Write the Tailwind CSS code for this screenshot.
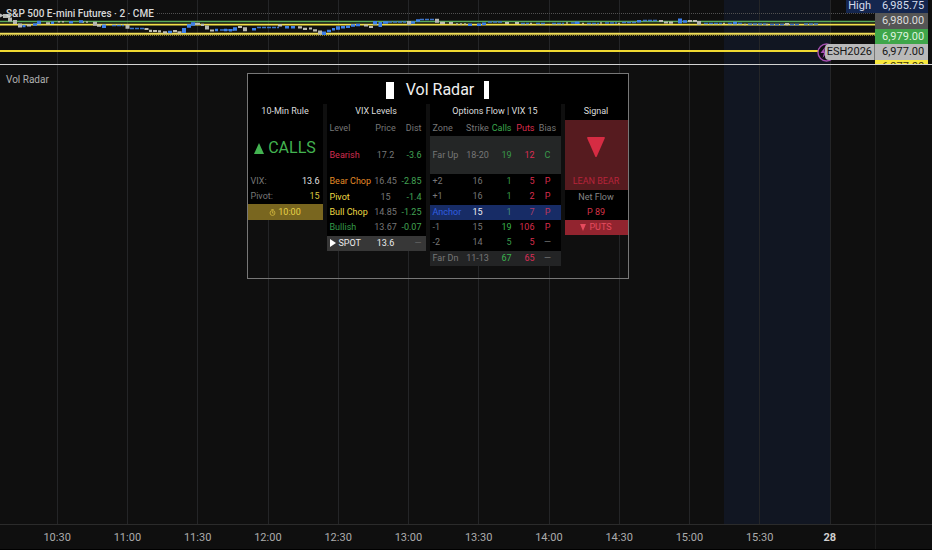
<!DOCTYPE html>
<html lang="en">
<head>
<meta charset="utf-8">
<meta name="viewport" content="width=device-width, initial-scale=1">
<title>Vol Radar</title>
<script src="https://cdn.jsdelivr.net/npm/@tailwindcss/browser@4"></script>
</head>
<body class="bg-[#0f0f0f] font-[Roboto,sans-serif] text-[#b4b4b4]">
<div class="relative grid h-screen grid-cols-[1fr_57px] grid-rows-[64px_1fr_25px] overflow-hidden border-b border-black">

  <!-- Time grid and session shading behind both panes -->
  <svg class="col-start-1 row-start-1 row-end-3 h-full w-full" viewBox="0 0 875 525" preserveAspectRatio="none" aria-hidden="true">
    <rect x="724" y="0" width="106" height="525" fill="#111622"/>
    <path d="M57.5 0V525M127.5 0V525M197.5 0V525M268.5 0V525M338.5 0V525M408.5 0V525M478.5 0V525M549.5 0V525M619.5 0V525M689.5 0V525M759.5 0V525M830.5 0V525" stroke="#242527" fill="none"/>
  </svg>

  <!-- Price pane -->
  <section class="relative col-start-1 row-start-1">
    <svg class="h-full w-full" viewBox="0 0 875 64" preserveAspectRatio="none" fill="none" aria-hidden="true">
      <path d="M157 13.5H875" stroke="#505050" stroke-dasharray="1 1"/>
      <path d="M0 21.5H875" stroke="#5bab57" stroke-width="1.6"/>
      <path d="M0 24.6H875" stroke="#f2e04a" stroke-width="1.6"/>
      <path d="M0 33.8H875" stroke="#f0de58" stroke-width="2"/>
      <path d="M0 35.5H875" stroke="#8d8126" stroke-dasharray="1 1"/>
      <path d="M0 51H822" stroke="#f0d932" stroke-width="2"/>
      <!-- candles: thin ranges -->
      <path d="M112 25.5h12M130 28.5h14M220 30h14M257 27.5h22M388 22h18M420 19.5h15M488 22h15M521 23.5h8M536 23.5h9M552 23.5h12M571 23h10M587 23.5h12M605 23h12M622 22.5h14M643 20.5h15M704 23.5h18M728 23.5h15M748 24h18M770 24.5h16M790 24.5h10M804 24h14" stroke="#3c74c9" stroke-width="1.5" stroke-dasharray="4 1"/>
      <path d="M58 21.8h8M82 22h8M456 24h12M530 23.5h4M566 23h4M582 23.5h4M600 23h4M618 23.5h4M723 23.5h4M744 24.5h3M766 24.5h3M786 24.5h3" stroke="#b8b8a6" stroke-width="1.6" stroke-dasharray="2 2"/>
      <!-- candles: bodies -->
      <path d="M22.500 26h3M33 24.500h4M51 22.800h3M69 22.300h4M79 21.500h4M168 32h4M215 30h3M224 30h3M229 30.300h3M252 29.300h4M285 27.300h4M291 27.300h4M327 31h4M332 29.300h3M341 27.300h4M346 26.800h4M351 25.500h4M356 25h4M383 22.500h5M411 22.500h4M416 20.500h4M468 24.800h4M477 24.800h4M482 23.800h4M575 22.800h4M637 21.200h4M683 21.500h4M733 23h4" stroke="#3d80ea" stroke-width="2.4"/>
      <path d="M37 22.500h4M102 26.300h4M187 26h4M191 24h4M233 29h4M322 33.300h4M336 28h4M373 22.800h4" stroke="#3d80ea" stroke-width="3.6"/>
      <path d="M182 30.500h4M378.500 24.600h3.500M678 21h4" stroke="#3d80ea" stroke-width="5"/>
      <path d="M27 25.300h4M46 23.300h4M97 25.700h4M144.500 29h4M149 30.800h3M153 31h4M158 31.300h3M163 32.300h4M173 31.200h4M177.500 32.300h4M195 23.800h5M201 24.800h3M210 30.500h4M238 27h4M278 25.300h4M298 27.300h4M303 28.800h4M309 28.500h3M313 30.300h4M364 25.500h4M369 27h4M440 22.800h5M449 23.200h4M505 23h4M515 23h4M659 21h4M664 22.500h4M669 22.600h4M688 21h4M693 21h4M785 24h4" stroke="#bdbdb3" stroke-width="2.2"/>
      <path d="M3 16h7M8 19.500h4M13 22h4M18 25.500h4M93 23.800h4M125.500 26.800h4M205 27.500h4M243 29.200h4M318 32.400h4M407 23h4M435 20.700h4M697 23h4" stroke="#b5b7b2" stroke-width="4"/>
      <path d="M0 13.500l4 2l-4 2z" fill="#bbb"/>
    </svg>
    <h1 class="absolute top-[6px] left-[6px] text-[10px] leading-4 font-medium text-[#d8d8d8]">S&amp;P 500 E-mini Futures · 2 · CME</h1>
    <span class="absolute top-0 right-0 h-[13px] bg-[#14264f] pr-1 pl-0.5 text-[11px] leading-[11px] text-[#d4dcec]">High</span>
    <svg class="absolute top-[43px] right-[39px] size-[19px]" viewBox="0 0 19 19" aria-hidden="true"><circle cx="9.500" cy="9.500" r="8.500" fill="#120b16" stroke="#a44fb0" stroke-width="1.400"/><path d="M8 4L3.500 10H7L5.500 15L11 8.500H7.500z" fill="#a44fb0"/></svg>
    <span class="absolute top-[44px] right-0 h-4 rounded-l-sm border-r border-[#777] bg-[#b9b9b9] px-0.5 text-[11px] leading-[15px] text-[#161616]">ESH2026</span>
  </section>

  <!-- Price scale -->
  <aside class="z-10 col-start-2 row-start-1 mr-1 flex flex-col overflow-hidden text-[11px] leading-4 *:shrink-0 *:pl-[7px]">
    <div class="h-[13px] bg-[#14264f] leading-[11px] text-[#d4dcec]">6,985.75</div>
    <div class="h-4 bg-[#555] leading-[15px] text-[#dedede]">6,980.00</div>
    <div class="h-[15px] bg-[#3fa64a] leading-[15px] text-[#def3df]">6,979.00</div>
    <div class="h-4 bg-[#b9b9b9] leading-[15px] text-[#161616]">6,977.00</div>
    <div class="h-4 bg-[#f8e83d] leading-[13px] text-[#3d390c]">6,977.00</div>
  </aside>

  <!-- Indicator pane -->
  <section class="z-10 col-span-2 col-start-1 row-start-2 grid grid-cols-[1fr_57px] border-t border-[#d2d2d2]">
    <div class="relative pt-2">
      <h2 class="absolute top-[7px] left-[6px] text-[10px] leading-4 text-[#b0b0b0]">Vol Radar</h2>

      <div class="mx-auto flex h-[206px] w-[382px] flex-col border border-[#777] text-[9px] leading-[15px]">
        <div class="flex h-[30px] items-center justify-center gap-2.5 bg-black pt-0.5 text-[16px] leading-5 text-[#f0f0f0]">
          <span class="h-[17px] w-2 bg-white"></span>
          <h3 class="pl-0.5">Vol Radar</h3>
          <span class="h-[18px] w-[5px] bg-white"></span>
        </div>

        <div class="grid grid-cols-[75fr_99fr_131fr_63fr] items-start gap-1">
          <!-- Rule -->
          <section class="flex h-[116px] flex-col bg-black">
            <h4 class="h-4 text-center text-[#dcdcdc]">10-Min Rule</h4>
            <div class="flex h-[54px] items-center justify-center gap-1 pt-0.5 text-[16px] leading-5 text-[#43b351]">
              <svg class="h-[11px] w-[10px]" viewBox="0 0 10 11" fill="currentColor" aria-hidden="true"><path d="M5 0L10 11H0z"/></svg>
              CALLS
            </div>
            <dl class="grid grow grid-cols-[1fr_auto] items-center px-[3px] text-right text-[#777]">
              <dt class="text-left">VIX:</dt><dd class="text-[#e0e0e0]">13.6</dd>
              <dt class="text-left">Pivot:</dt><dd class="text-[#dcc83f]">15</dd>
            </dl>
            <div class="flex h-4 items-center justify-center gap-0.5 bg-[#79661f] text-[#e8d247]">
              <svg class="size-[7px]" viewBox="0 0 6 6" fill="none" stroke="#c9ae3a" stroke-width=".8" aria-hidden="true"><circle cx="3" cy="3.400" r="2.100"/><path d="M2 .5h2M3 2v1.500h1"/></svg>
              10:00
            </div>
          </section>

          <!-- VIX levels -->
          <section class="bg-black">
            <h4 class="h-4 text-center text-[#dcdcdc]">VIX Levels</h4>
            <table class="h-[131px] w-full table-fixed border-collapse text-center text-[#777] [&_td]:p-0 [&_th]:p-0 [&_th]:font-normal">
              <colgroup><col class="w-[45px]"><col class="w-[28px]"><col></colgroup>
              <thead><tr class="h-[16px]"><th class="text-left"><span class="pl-[3px]">Level</span></th><th>Price</th><th class="text-right"><span class="pr-1">Dist</span></th></tr></thead>
              <tbody>
                <tr class="h-[38px]"><th class="text-left text-[#d42d50]"><span class="pl-[3px]">Bearish</span></th><td>17.2</td><td class="text-right text-[#42a354]"><span class="pr-1">-3.6</span></td></tr>
                <tr><th class="text-left whitespace-nowrap text-[#e28a26]"><span class="pl-[3px]">Bear Chop</span></th><td>16.45</td><td class="text-right text-[#42a354]"><span class="pr-1">-2.85</span></td></tr>
                <tr><th class="text-left text-[#ecd944]"><span class="pl-[3px]">Pivot</span></th><td>15</td><td class="text-right text-[#42a354]"><span class="pr-1">-1.4</span></td></tr>
                <tr><th class="text-left whitespace-nowrap text-[#ecd944]"><span class="pl-[3px]">Bull Chop</span></th><td>14.85</td><td class="text-right text-[#42a354]"><span class="pr-1">-1.25</span></td></tr>
                <tr><th class="text-left text-[#349b49]"><span class="pl-[3px]">Bullish</span></th><td>13.67</td><td class="text-right text-[#42a354]"><span class="pr-1">-0.07</span></td></tr>
                <tr class="bg-[#373737] text-[#ededed]"><th class="text-left whitespace-nowrap"><span class="flex items-center gap-[3px] pl-[3px]"><svg class="h-[8px] w-[6px]" viewBox="0 0 6 8" fill="white" aria-hidden="true"><path d="M0 0L6 4L0 8z"/></svg>SPOT</span></th><td>13.6</td><td class="text-right text-[#666]"><span class="pr-1">—</span></td></tr>
              </tbody>
            </table>
          </section>

          <!-- Options flow -->
          <section class="bg-black">
            <h4 class="h-4 text-center text-[#dcdcdc]">Options Flow | VIX 15</h4>
            <table class="h-[146px] w-full table-fixed border-collapse text-center text-[#777] [&_td]:p-0 [&_th]:p-0 [&_th]:font-normal">
              <colgroup><col class="w-[34px]"><col class="w-[28px]"><col class="w-[20px]"><col class="w-[23px]"><col></colgroup>
              <thead><tr class="h-[16px]"><th class="text-left"><span class="pl-[3px]">Zone</span></th><th>Strike</th><th class="text-right text-[#3ba64d]">Calls</th><th class="text-right text-[#d92d4c]">Puts</th><th>Bias</th></tr></thead>
              <tbody>
                <tr class="h-[38px] bg-[#242626]"><th class="text-left whitespace-nowrap"><span class="pl-[3px]">Far Up</span></th><td>18-20</td><td class="text-right text-[#3a9a4b]">19</td><td class="text-right text-[#dc2d55]">12</td><td class="text-[#3a9a4b]">C</td></tr>
                <tr><th class="text-left"><span class="pl-[3px]">+2</span></th><td>16</td><td class="text-right text-[#3a9a4b]">1</td><td class="text-right text-[#d92d4c]">5</td><td class="text-[#d92d4c]">P</td></tr>
                <tr><th class="text-left"><span class="pl-[3px]">+1</span></th><td>16</td><td class="text-right text-[#3a9a4b]">1</td><td class="text-right text-[#d92d4c]">2</td><td class="text-[#d92d4c]">P</td></tr>
                <tr class="bg-[#172c66]"><th class="text-left text-[#315fe0]"><span class="pl-[3px]">Anchor</span></th><td class="text-[#f2f2f2]">15</td><td class="text-right text-[#458b78]">1</td><td class="text-right text-[#ad3f6a]">7</td><td class="text-[#c03659]">P</td></tr>
                <tr><th class="text-left"><span class="pl-[3px]">-1</span></th><td>15</td><td class="text-right text-[#3bb34d]">19</td><td class="text-right text-[#d92d4c]">106</td><td class="text-[#d92d4c]">P</td></tr>
                <tr><th class="text-left"><span class="pl-[3px]">-2</span></th><td>14</td><td class="text-right text-[#3a9a4b]">5</td><td class="text-right text-[#d92d4c]">5</td><td>—</td></tr>
                <tr class="bg-[#232425]"><th class="text-left whitespace-nowrap"><span class="pl-[3px]">Far Dn</span></th><td>11-13</td><td class="text-right text-[#3bb34d]">67</td><td class="text-right text-[#dc2d55]">65</td><td>—</td></tr>
              </tbody>
            </table>
          </section>

          <!-- Signal -->
          <section class="flex h-[131px] flex-col bg-black text-center">
            <h4 class="h-4 text-[#dcdcdc]">Signal</h4>
            <div class="flex h-[70px] flex-col items-center bg-[#561b1f] text-[#b7243b]">
              <div class="flex h-[54px] items-center">
                <svg class="h-[20px] w-[18px]" viewBox="0 0 18 20" fill="#d62c43" aria-hidden="true"><path d="M1 0H17Q18.300 0 17.800 1.200L9.800 19.500Q9 20.800 8.200 19.500L.2 1.200Q-.3 0 1 0z"/></svg>
              </div>
              <strong class="font-normal">LEAN BEAR</strong>
            </div>
            <p class="text-[#858585]">Net Flow</p>
            <p class="grow text-[#d63347]">P 89</p>
            <div class="flex h-[15px] items-center justify-center gap-[3px] bg-[#92242f] text-[#e64b5e]">
              <svg class="h-[7px] w-[6px]" viewBox="0 0 5 6" fill="currentColor" aria-hidden="true"><path d="M0 0H5L2.500 6z"/></svg>
              PUTS
            </div>
          </section>
        </div>
      </div>
    </div>
    <div class="border-l border-[#1c1c1c]"></div>
  </section>

  <!-- Time axis -->
  <footer class="col-span-2 row-start-3 grid grid-cols-[1fr_57px] border-t border-[#2b2b2b] text-[11px] leading-[25px]">
    <ol class="grid grid-cols-12 pr-[10px] pl-[22px] text-center text-[#acacac]">
      <li>10:30</li><li>11:00</li><li>11:30</li><li>12:00</li><li>12:30</li><li>13:00</li><li>13:30</li><li>14:00</li><li>14:30</li><li>15:00</li><li>15:30</li><li class="font-bold text-[#d0d0d0]">28</li>
    </ol>
    <div class="border-l border-[#1c1c1c]"></div>
  </footer>
</div>
</body>
</html>
